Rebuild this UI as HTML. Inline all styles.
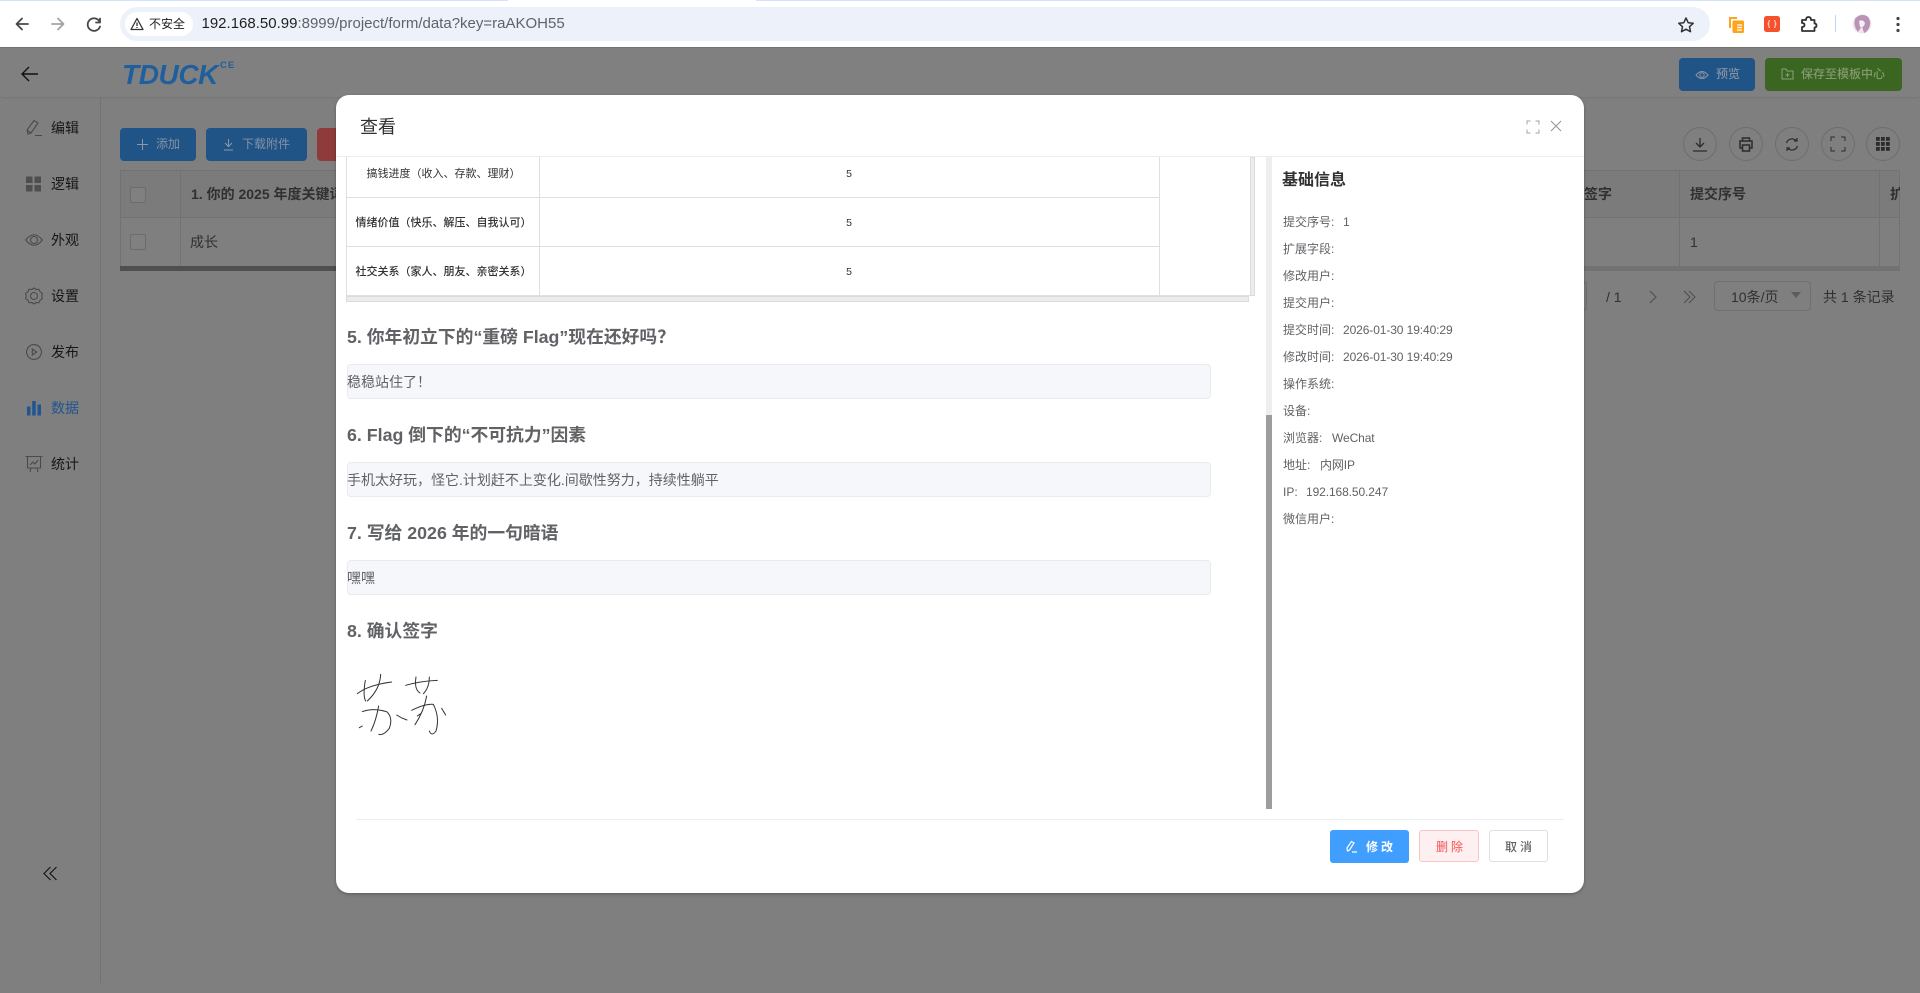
<!DOCTYPE html>
<html lang="zh-CN"><head><meta charset="utf-8"><title>TDUCK</title>
<style>
*{box-sizing:border-box}
html,body{margin:0;padding:0;width:1920px;height:993px;overflow:hidden;background:#7f7f7f;font-family:"Liberation Sans","Noto Sans CJK SC",sans-serif}
.a{position:absolute}
.t{position:absolute;white-space:nowrap}
svg{position:absolute;overflow:visible}
.nav{position:absolute;left:51px;width:40px;height:20px;line-height:20px;font-size:14px;color:#161616;white-space:nowrap}
.btn{position:absolute;border-radius:4px;color:#8a98a8;font-size:12px;line-height:33px;height:33px;white-space:nowrap}
.rd{position:absolute;top:127px;width:34px;height:34px;border:1px solid #6d6d6d;border-radius:50%}
.q{position:absolute;left:347px;font-size:17.8px;font-weight:700;color:#606266;line-height:24px;white-space:nowrap}
.ans{position:absolute;left:347px;width:864px;height:35px;background:#f5f7fa;border:1px solid #e9ebf0;border-radius:4px;font-size:14px;color:#606266;line-height:35px;white-space:nowrap;text-indent:-1px}
.i{position:absolute;left:1283px;font-size:12px;color:#606266;line-height:18px;white-space:nowrap}
.i b{font-weight:400;position:absolute;top:0;letter-spacing:-.1px}
.cell{position:absolute;left:347px;width:193px;text-align:center;font-size:11px;color:#303133;line-height:16px;white-space:nowrap}
.five{position:absolute;left:840px;width:18px;text-align:center;font-size:10.5px;color:#303133;line-height:16px}
</style></head><body>

<!-- browser chrome -->
<div class="a" style="left:0;top:0;width:1920px;height:47px;background:#fff"></div>
<div class="a" style="left:0;top:0;width:508px;height:1px;background:#d3e3fd"></div>
<div class="a" style="left:756px;top:0;width:1164px;height:1px;background:#d3e3fd"></div>
<svg style="left:0;top:0" width="120" height="47" fill="none" stroke-linecap="round" stroke-linejoin="round">
<path d="M28 24H17M22 18.5L16.5 24L22 29.5" stroke="#474747" stroke-width="1.8"/>
<path d="M52 24H63M58 18.5L63.500 24L58 29.500" stroke="#a3a3a3" stroke-width="1.8"/>
<path d="M99.500 21.500A6.300 6.300 0 1 0 100 26.500M100 18.500V22.500H96" stroke="#474747" stroke-width="1.800"/>
</svg>
<div class="a" style="left:120px;top:7px;width:1590px;height:34px;background:#edf2fa;border-radius:17px"></div>
<div class="a" style="left:125px;top:12px;width:68px;height:24px;background:#fff;border-radius:12px"></div>
<svg style="left:130px;top:17px" width="15" height="14" fill="none" stroke="#333" stroke-width="1.300" stroke-linejoin="round"><path d="M7 1.500L13 12.500H1Z"/><path d="M7 5.500V9M7 10V11"/></svg>
<div class="t" style="left:149px;top:15px;font-size:12px;line-height:18px;color:#1f1f1f">不安全</div>
<div class="t" style="left:201.500px;top:13px;font-size:15px;line-height:22px;color:#1f1f1f">192.168.50.99<span style="color:#5f6368">:8999/project/form/data?key=raAKOH55</span></div>
<svg style="left:1677px;top:16px" width="18" height="17" fill="none" stroke="#333" stroke-width="1.500" stroke-linejoin="round"><path d="M9 2l2.200 4.700 5 .6-3.700 3.400 1 5L9 13.200 4.500 15.700l1-5L1.800 7.300l5-.6Z"/></svg>
<svg style="left:1728px;top:16px" width="17" height="18"><path d="M1 1H9V3H3V12H1Z" fill="#ffa31a"/><rect x="4.500" y="4.500" width="11.500" height="12.500" rx="1.500" fill="#ffa31a"/><path d="M9 9H14M9 11.500H14M9 14H14" stroke="#fff" stroke-width="1.200"/></svg>
<div class="a" style="left:1764px;top:16px;width:16px;height:16px;background:#f5512d;border-radius:2.500px"></div>
<svg style="left:1764px;top:16px" width="16" height="16" fill="none" stroke="#ffd8cc" stroke-width="1"><path d="M6 4.500Q4.800 4.500 4.800 6V7.300L4 8 4.800 8.700V10Q4.800 11.500 6 11.500M10 4.500Q11.200 4.500 11.200 6V7.300L12 8 11.200 8.700V10Q11.200 11.500 10 11.500"/></svg>
<svg style="left:1800px;top:15px" width="17" height="18" fill="none" stroke="#333" stroke-width="1.800" stroke-linejoin="round"><path d="M2 5H6Q6 2 8.500 2T11 5H14.500V8.500Q16.500 8.500 16.500 10.500T14.500 12.500V16H2V12Q4.500 12 4.500 10T2 8Z"/></svg>
<div class="a" style="left:1834.500px;top:15px;width:1px;height:17px;background:#c5d4f0"></div>
<svg style="left:1852px;top:14px" width="20" height="20"><circle cx="10" cy="10" r="9.500" fill="#efe6ee"/><path d="M3 5Q8-1 15 2 20 7 17 14 15 18 12 19L10 12 6 18Q1 12 3 5Z" fill="#b893b5"/><path d="M7 7Q11 5 13 9 12 14 8 13Z" fill="#f7eff4"/></svg>
<svg style="left:1895px;top:16px" width="6" height="16" fill="#444"><circle cx="3" cy="2.500" r="1.600"/><circle cx="3" cy="8.500" r="1.600"/><circle cx="3" cy="14.500" r="1.600"/></svg>

<!-- app header -->
<div class="a" style="left:0;top:47px;width:1920px;height:50px;background:#808080;border-top:1px solid #737373;box-shadow:0 1px 2px rgba(0,0,0,.08);border-radius:0 0 4px 4px"></div>
<svg style="left:20px;top:65px" width="20" height="18" fill="none" stroke="#111" stroke-width="1.400"><path d="M18 9H2M9 2L2 9L9 16"/></svg>
<div class="t" style="left:122px;top:58px;font-size:28px;line-height:34px;font-weight:700;font-style:italic;color:#1f5f9d;letter-spacing:-.4px">TDUCK</div>
<div class="t" style="left:220px;top:60px;font-size:9.500px;line-height:12px;font-weight:700;color:#1f5f9d;letter-spacing:1.200px">CE</div>
<div class="btn" style="left:1679px;top:58px;width:76px;background:#215486"></div>
<svg style="left:1695px;top:69px" width="14" height="12" fill="none" stroke="#8a98a8" stroke-width="1"><path d="M1 6Q7-1 13 6 7 13 1 6Z"/><circle cx="7" cy="6" r="2.200"/></svg>
<div class="t" style="left:1716px;top:65px;font-size:12px;line-height:18px;color:#8392a3;font-weight:500">预览</div>
<div class="btn" style="left:1765px;top:58px;width:137px;background:#3a6621"></div>
<svg style="left:1781px;top:68px" width="13" height="12" fill="none" stroke="#8aa078" stroke-width="1"><path d="M1 1H5L6 3H12V11H1ZM6.500 5V9M4.500 7H8.500"/></svg>
<div class="t" style="left:1801px;top:65px;font-size:12px;line-height:18px;color:#84996f;font-weight:500">保存至模板中心</div>

<!-- sidebar -->
<div class="a" style="left:100px;top:97px;width:1px;height:886px;background:#727272"></div>
<svg style="left:25px;top:119px" width="18" height="18" fill="none" stroke="#4a4a4a" stroke-width="1.100"><path d="M3 15L2 11 9 1.500 13 4 6 14ZM2 11L6 14M10 16.500H17"/></svg>
<svg style="left:26px;top:176px" width="15" height="16" fill="#4e4e4e"><rect width="6.500" height="6.500" y=".5"/><rect x="8.500" y=".5" width="6.500" height="6.500"/><rect y="9" width="6.500" height="6.500"/><rect x="8.500" y="9" width="6.500" height="6.500"/></svg>
<svg style="left:25px;top:233px" width="18" height="14" fill="none" stroke="#4a4a4a" stroke-width="1.100"><path d="M.7 7Q9-3.500 17.300 7 9 17.500.7 7Z"/><circle cx="9" cy="7" r="3.500"/></svg>
<svg style="left:25px;top:287px" width="18" height="18" fill="none" stroke="#4a4a4a" stroke-width="1.100"><path d="M9 1l2.200 1.500 2.700-.2 1.200 2.400 2.200 1.500-.5 2.800.5 2.800-2.200 1.500-1.200 2.400-2.700-.2L9 17l-2.200-1.500-2.700.2-1.200-2.400L.7 11.800 1.200 9 .7 6.200l2.200-1.500 1.200-2.400 2.700.2Z"/><circle cx="9" cy="9" r="3.500"/></svg>
<svg style="left:26px;top:344px" width="16" height="16" fill="none" stroke="#4a4a4a" stroke-width="1.100"><circle cx="8" cy="8" r="7.400"/><path d="M6.300 5V11L10.500 8Z"/></svg>
<svg style="left:26px;top:400px" width="16" height="16" fill="#1f5590"><rect x="1" y="6.500" width="3.500" height="9"/><rect x="6.200" y="1" width="3.500" height="14.500"/><rect x="11.500" y="4.500" width="3.500" height="11"/></svg>
<svg style="left:25px;top:455px" width="18" height="18" fill="none" stroke="#4a4a4a" stroke-width="1.100"><path d="M.5 1.500H17.500M2.500 2V13H15.500V2M5 17L6 13M13 17L12 13M5 10L8 7 10 9 13 5"/></svg>
<div class="nav" style="top:118px">编辑</div>
<div class="nav" style="top:174px">逻辑</div>
<div class="nav" style="top:230px">外观</div>
<div class="nav" style="top:286px">设置</div>
<div class="nav" style="top:342px">发布</div>
<div class="nav" style="top:398px;color:#1f5590">数据</div>
<div class="nav" style="top:454px">统计</div>
<svg style="left:43px;top:866px" width="15" height="15" fill="none" stroke="#111" stroke-width="1.100"><path d="M7.500 1L1 7.500 7.500 14M13.500 1L7 7.500 13.500 14"/></svg>

<!-- toolbar behind dialog -->
<div class="btn" style="left:120px;top:128px;width:76px;background:#215486"></div>
<svg style="left:136px;top:138px" width="13" height="13" stroke="#8a98a8" stroke-width="1"><path d="M6.500 1V12M1 6.500H12"/></svg>
<div class="t" style="left:156px;top:135px;font-size:12px;line-height:18px;color:#8392a3">添加</div>
<div class="btn" style="left:206px;top:128px;width:101px;background:#215486"></div>
<svg style="left:223px;top:138px" width="11" height="13" fill="none" stroke="#8a98a8" stroke-width="1"><path d="M5.500 1V8M2 5L5.500 8.500 9 5M1 12H10"/></svg>
<div class="t" style="left:242px;top:135px;font-size:12px;line-height:18px;color:#8392a3">下载附件</div>
<div class="btn" style="left:317px;top:128px;width:40px;background:#8f3b3b"></div>

<!-- table behind dialog -->
<div class="a" style="left:120px;top:170px;width:1780px;height:48px;background:#7b7b7b;border:1px solid #727272;border-bottom:1px solid #727272"></div>
<div class="a" style="left:120px;top:218px;width:1780px;height:48px;border-left:1px solid #727272;border-right:1px solid #727272"></div>
<div class="a" style="left:120px;top:266px;width:1780px;height:5px;background:#727272"></div>
<div class="a" style="left:120px;top:266px;width:240px;height:5px;background:#4f4f4f"></div>
<div class="a" style="left:180px;top:170px;width:1px;height:96px;background:#727272"></div>
<div class="a" style="left:1679px;top:170px;width:1px;height:96px;background:#727272"></div>
<div class="a" style="left:1879px;top:170px;width:1px;height:96px;background:#727272"></div>
<div class="a" style="left:130px;top:187px;width:16px;height:16px;border:1px solid #6c6c6c;border-radius:2px;background:#808080"></div>
<div class="a" style="left:130px;top:234px;width:16px;height:16px;border:1px solid #6c6c6c;border-radius:2px;background:#808080"></div>
<div class="t" style="left:191px;top:184px;width:145px;overflow:hidden;font-size:14px;font-weight:700;line-height:20px;color:#303030">1. 你的 2025 年度关键词</div>
<div class="t" style="left:190px;top:232px;font-size:14px;line-height:20px;color:#303030">成长</div>
<div class="t" style="left:1584px;top:184px;font-size:14px;font-weight:700;line-height:20px;color:#303030">签字</div>
<div class="t" style="left:1690px;top:184px;font-size:14px;font-weight:700;line-height:20px;color:#303030">提交序号</div>
<div class="t" style="left:1690px;top:232px;font-size:14px;line-height:20px;color:#303030">1</div>
<div class="t" style="left:1890px;top:184px;width:10px;overflow:hidden;font-size:14px;font-weight:700;line-height:20px;color:#303030">扩展</div>

<!-- round tools -->
<div class="rd" style="left:1683px"></div><div class="rd" style="left:1729px"></div><div class="rd" style="left:1775px"></div><div class="rd" style="left:1821px"></div><div class="rd" style="left:1866px"></div>
<svg style="left:1693px;top:137px" width="14" height="15" fill="none" stroke="#2c2c2c" stroke-width="1.300"><path d="M7 1V10M3 6L7 10 11 6M0 14H14"/></svg>
<svg style="left:1739px;top:137px" width="14" height="15" fill="none" stroke="#2c2c2c" stroke-width="1.500"><path d="M3.500 4V1H10.500V4M3 11H1V4H13V11H11M3.500 8H10.500V14H3.500Z"/></svg>
<svg style="left:1785px;top:137px" width="14" height="15" fill="none" stroke="#2c2c2c" stroke-width="1.200"><path d="M1.500 6Q3 1.500 8 2L12 3.500M12 1V4H9M12.500 9Q11 13.500 6 13L2 11.500M2 14V11H5"/></svg>
<svg style="left:1831px;top:137px" width="14" height="14" fill="none" stroke="#2c2c2c" stroke-width="1"><path d="M0 4V0H4M10 0H14V4M14 10V14H10M4 14H0V10"/></svg>
<svg style="left:1876px;top:137px" width="14" height="14" fill="#2c2c2c"><rect width="3.800" height="3.800"/><rect x="5" width="3.800" height="3.800"/><rect x="10" width="3.800" height="3.800"/><rect y="5" width="3.800" height="3.800"/><rect x="5" y="5" width="3.800" height="3.800"/><rect x="10" y="5" width="3.800" height="3.800"/><rect y="10" width="3.800" height="3.800"/><rect x="5" y="10" width="3.800" height="3.800"/><rect x="10" y="10" width="3.800" height="3.800"/></svg>

<!-- pagination -->
<div class="a" style="left:1560px;top:281px;width:27px;height:30px;border:1px solid #6f6f6f;border-radius:4px"></div>
<div class="t" style="left:1606px;top:287px;font-size:14px;line-height:20px;color:#303030">/ 1</div>
<svg style="left:1649px;top:290px" width="8" height="14" fill="none" stroke="#4c4c4c" stroke-width="1"><path d="M1 1L7 7 1 13"/></svg>
<svg style="left:1683px;top:290px" width="13" height="14" fill="none" stroke="#4c4c4c" stroke-width="1"><path d="M1 1L7 7 1 13M6 1L12 7 6 13"/></svg>
<div class="a" style="left:1714px;top:281px;width:97px;height:30px;border:1px solid #6f6f6f;border-radius:4px"></div>
<div class="t" style="left:1731px;top:287px;font-size:14px;line-height:20px;color:#303030">10条/页</div>
<svg style="left:1791px;top:292px" width="10" height="6" fill="#5c5c5c"><path d="M0 0H10L5 6Z"/></svg>
<div class="t" style="left:1823px;top:287px;font-size:14px;line-height:20px;color:#303030">共 1 条记录</div>

<!-- dialog -->
<div class="a" style="left:336px;top:95px;width:1248px;height:798px;background:#fff;border-radius:13px;box-shadow:0 1px 3px rgba(0,0,0,.3)"></div>
<div class="t" style="left:360px;top:114px;font-size:18px;line-height:26px;color:#303133">查看</div>
<svg style="left:1527px;top:121px" width="12" height="12" fill="none" stroke="#a0a3a9" stroke-width="1"><path d="M0 3.500V0H3.500M8.500 0H12V3.500M12 8.500V12H8.500M3.500 12H0V8.500"/></svg>
<svg style="left:1551px;top:121px" width="10" height="10" fill="none" stroke="#909399" stroke-width="1"><path d="M0 0L10 10M10 0L0 10"/></svg>
<div class="a" style="left:336px;top:156px;width:1248px;height:1px;background:#ebedf0"></div>

<!-- matrix table remainder -->
<div class="a" style="left:346px;top:157px;width:1px;height:139px;background:#dcdfe6"></div>
<div class="a" style="left:539px;top:157px;width:1px;height:139px;background:#dcdfe6"></div>
<div class="a" style="left:1159px;top:157px;width:1px;height:139px;background:#dcdfe6"></div>
<div class="a" style="left:347px;top:197px;width:813px;height:1px;background:#dcdfe6"></div>
<div class="a" style="left:347px;top:246px;width:813px;height:1px;background:#dcdfe6"></div>
<div class="a" style="left:347px;top:295px;width:813px;height:1px;background:#dcdfe6"></div>
<div class="a" style="left:1250px;top:157px;width:5px;height:139px;background:#ececec;border:1px solid #dcdcdc"></div>
<div class="a" style="left:346px;top:296px;width:903px;height:6px;background:#ececec;border:1px solid #dcdcdc"></div>
<div class="a" style="left:1159px;top:295px;width:91px;height:1px;background:#dcdfe6"></div>
<div class="cell" style="top:166px">搞钱进度（收入、存款、理财）</div>
<div class="cell" style="top:215px;font-weight:500">情绪价值（快乐、解压、自我认可）</div>
<div class="cell" style="top:264px;font-weight:500">社交关系（家人、朋友、亲密关系）</div>
<div class="five" style="top:166px">5</div><div class="five" style="top:215px">5</div><div class="five" style="top:264px">5</div>

<div class="q" style="top:325px">5. 你年初立下的“重磅 Flag”现在还好吗？</div>
<div class="ans" style="top:364px">稳稳站住了！</div>
<div class="q" style="top:423px">6. Flag 倒下的“不可抗力”因素</div>
<div class="ans" style="top:462px">手机太好玩，怪它.计划赶不上变化.间歇性努力，持续性躺平</div>
<div class="q" style="top:521px">7. 写给 2026 年的一句暗语</div>
<div class="ans" style="top:560px">嘿嘿</div>
<div class="q" style="top:619px">8. 确认签字</div>

<svg style="left:330px;top:621px" width="130" height="130" viewBox="0 0 390 390" fill="none" stroke="#333" stroke-width="3" stroke-linecap="round">
<path d="M82 218Q115 192 185 183"/><path d="M106 178Q98 225 107 240"/><path d="M152 160Q150 205 112 240"/>
<path d="M97 272Q130 260 170 272 190 290 178 322 160 345 146 340"/><path d="M146 255Q138 300 123 330"/>
<path d="M88 320L97 315"/><path d="M200 282Q215 292 231 297"/>
<path d="M227 193Q270 180 322 178"/><path d="M258 168Q252 205 270 216"/><path d="M298 168Q298 200 280 218"/>
<path d="M245 268Q285 248 310 250 330 290 318 330 305 348 298 330"/><path d="M290 225Q282 270 255 311"/>
<path d="M335 262L347 282"/><path d="M262 285L272 278"/>
</svg>

<!-- scrollbar -->
<div class="a" style="left:1266px;top:157px;width:6px;height:652px;background:#eeeeee"></div>
<div class="a" style="left:1266px;top:415px;width:6px;height:394px;background:#9d9d9d"></div>

<!-- info panel -->
<div class="t" style="left:1282px;top:169px;font-size:16px;font-weight:700;line-height:24px;color:#303133">基础信息</div>
<div class="i" style="top:213px">提交序号:<b style="left:60px">1</b></div>
<div class="i" style="top:240px">扩展字段:</div>
<div class="i" style="top:267px">修改用户:</div>
<div class="i" style="top:294px">提交用户:</div>
<div class="i" style="top:321px">提交时间:<b style="left:60px">2026-01-30 19:40:29</b></div>
<div class="i" style="top:348px">修改时间:<b style="left:60px">2026-01-30 19:40:29</b></div>
<div class="i" style="top:375px">操作系统:</div>
<div class="i" style="top:402px">设备:</div>
<div class="i" style="top:429px">浏览器:<b style="left:49px">WeChat</b></div>
<div class="i" style="top:456px">地址:<b style="left:37px">内网IP</b></div>
<div class="i" style="top:483px">IP:<b style="left:23px">192.168.50.247</b></div>
<div class="i" style="top:510px">微信用户:</div>

<!-- footer -->
<div class="a" style="left:356px;top:819px;width:1208px;height:1px;background:#ebeef5"></div>
<div class="a" style="left:1330px;top:830px;width:79px;height:33px;background:#409eff;border-radius:3px"></div>
<svg style="left:1346px;top:840px" width="12" height="13" fill="none" stroke="#fff" stroke-width="1.200"><path d="M1.500 11L1 8 5.500 1.500 8 3 3.500 10ZM6 12H11"/></svg>
<div class="t" style="left:1366px;top:838px;font-size:12px;line-height:18px;font-weight:700;color:#fff;letter-spacing:3px">修改</div>
<div class="a" style="left:1419px;top:830px;width:60px;height:32px;background:#fef0f0;border:1px solid #fbc4c4;border-radius:3px"></div>
<div class="t" style="left:1436px;top:838px;font-size:12px;line-height:18px;font-weight:500;color:#f56c6c;letter-spacing:3px">删除</div>
<div class="a" style="left:1489px;top:830px;width:59px;height:32px;background:#fff;border:1px solid #dcdfe6;border-radius:3px"></div>
<div class="t" style="left:1505px;top:838px;font-size:12px;line-height:18px;font-weight:500;color:#606266;letter-spacing:3px">取消</div>
</body></html>
